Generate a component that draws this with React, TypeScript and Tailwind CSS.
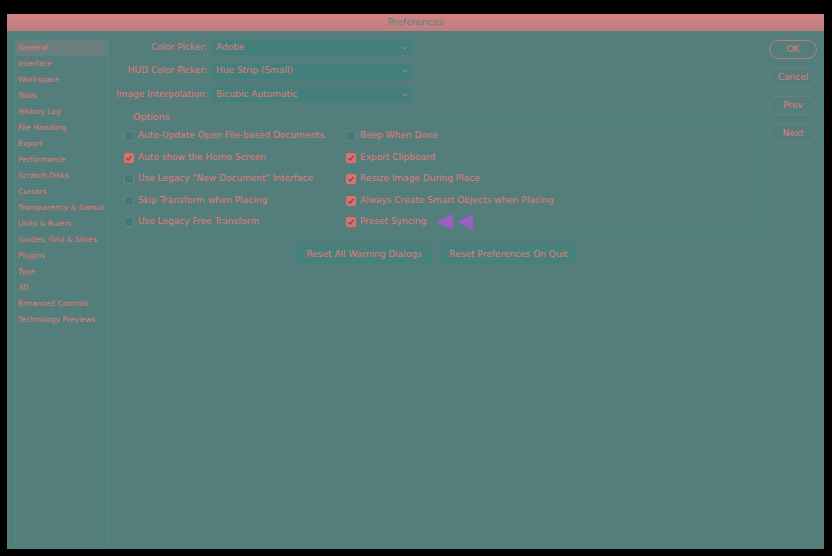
import React from "react";

const sidebar = [
  "General",
  "Interface",
  "Workspace",
  "Tools",
  "History Log",
  "File Handling",
  "Export",
  "Performance",
  "Scratch Disks",
  "Cursors",
  "Transparency & Gamut",
  "Units & Rulers",
  "Guides, Grid & Slices",
  "Plugins",
  "Type",
  "3D",
  "Enhanced Controls",
  "Technology Previews",
];

const left: [string, boolean][] = [
  ["Auto-Update Open File-based Documents", false],
  ["Auto show the Home Screen", true],
  ['Use Legacy "New Document" Interface', false],
  ["Skip Transform when Placing", false],
  ["Use Legacy Free Transform", false],
];
const right: [string, boolean][] = [
  ["Beep When Done", false],
  ["Export Clipboard", true],
  ["Resize Image During Place", true],
  ["Always Create Smart Objects when Placing", true],
  ["Preset Syncing", true],
];

function Check({ on }: { on: boolean }) {
  return on ? (
    <span className="flex h-[10px] w-[10px] shrink-0 items-center justify-center rounded-[2px] bg-[#d97271]">
      <svg width="8" height="8" viewBox="0 0 8 8">
        <path d="M1.5 4.2 L3.2 6 L6.5 1.8" fill="none" stroke="#7a4a4c" strokeWidth="1.3" />
      </svg>
    </span>
  ) : (
    <span className="h-[10px] w-[10px] shrink-0 rounded-[2px] border border-[#5f8985] bg-[#487875]" />
  );
}

function Row({ label, on, arrows }: { label: string; on: boolean; arrows?: boolean }) {
  return (
    <div className="flex h-[21.5px] items-center gap-[4px]">
      <Check on={on} />
      <span className="whitespace-nowrap">{label}</span>
      {arrows && (
        <svg width="40" height="18" viewBox="0 0 40 18" className="ml-[5px]">
          <polygon points="0,9 17,1 17,17" fill="#9a5fc6" />
          <polygon points="21,9 37,1 37,17" fill="#9a5fc6" />
        </svg>
      )}
    </div>
  );
}

function Select({ label, value }: { label: string; value: string }) {
  return (
    <div className="flex items-center gap-[4px]">
      <span className="w-[91px] whitespace-nowrap text-right">{label}</span>
      <div className="flex h-[15px] w-[201px] items-center justify-between bg-[#44807b] pl-[5px] pr-[4px]">
        <span>{value}</span>
        <svg width="6" height="4" viewBox="0 0 6 4">
          <path d="M0.8 0.8 L3 3 L5.2 0.8" fill="none" stroke="#c97a78" strokeWidth="0.9" />
        </svg>
      </div>
    </div>
  );
}

function Pill({ label, strong }: { label: string; strong?: boolean }) {
  return (
    <div
      className={
        "flex h-[19px] w-[48px] items-center justify-center rounded-full border " +
        (strong ? "border-[#c17a79]" : "border-[#6f807d]")
      }
    >
      {label}
    </div>
  );
}

export default function App() {
  return (
    <div
      className="h-[556px] w-[832px] bg-black pl-[7px] pt-[14px] text-[#e27a78]"
      style={{ fontFamily: '"DejaVu Sans", "Liberation Sans", sans-serif' }}
    >
      <div className="flex h-[535px] w-[817px] flex-col">
        <div className="flex h-[17px] items-center justify-center bg-gradient-to-b from-[#d28282] to-[#bd7f7e] text-[9.5px] text-[#5a8384]">
          Preferences
        </div>
        <div className="flex flex-1 bg-[#537e7c] pb-[3px] pl-[8px] pr-[7px] pt-[8px]">
          <div className="w-[94px] border border-[#4a8a85] text-[7.5px]">
            {sidebar.map((s, i) => (
              <div
                key={s}
                className={
                  "flex h-[16px] items-center pl-[2px] whitespace-nowrap " +
                  (i === 0 ? "bg-[#6a7f7d]" : "")
                }
              >
                {s}
              </div>
            ))}
          </div>
          <div className="ml-[7px] flex w-[640px] flex-col text-[9px]">
            <div className="flex flex-col gap-[8.5px] pt-[1px]">
              <Select label="Color Picker:" value="Adobe" />
              <Select label="HUD Color Picker:" value="Hue Strip (Small)" />
              <Select label="Image Interpolation:" value="Bicubic Automatic" />
            </div>
            <fieldset className="mt-[8px] ml-[1px] h-[127px] rounded-[3px] border border-[#4a8884] pl-[6px]">
              <legend className="ml-[3px] px-[6px] text-[9.5px]">Options</legend>
              <div className="flex pt-[1px]">
                <div className="w-[222px]">
                  {left.map(([l, on]) => (
                    <Row key={l} label={l} on={on} />
                  ))}
                </div>
                <div>
                  {right.map(([l, on], i) => (
                    <Row key={l} label={l} on={on} arrows={i === 4} />
                  ))}
                </div>
              </div>
            </fieldset>
            <div className="mt-[8px] flex justify-center gap-[9px]">
              <div className="flex h-[19px] w-[136px] items-center justify-center bg-[#47817c]">
                Reset All Warning Dialogs
              </div>
              <div className="flex h-[19px] w-[135px] items-center justify-center bg-[#47817c]">
                Reset Preferences On Quit
              </div>
            </div>
          </div>
          <div className="ml-[13px] flex flex-col gap-[9px] pt-[1px] text-[9px]">
            <Pill label="OK" strong />
            <Pill label="Cancel" />
            <Pill label="Prev" />
            <Pill label="Next" />
          </div>
        </div>
      </div>
    </div>
  );
}
